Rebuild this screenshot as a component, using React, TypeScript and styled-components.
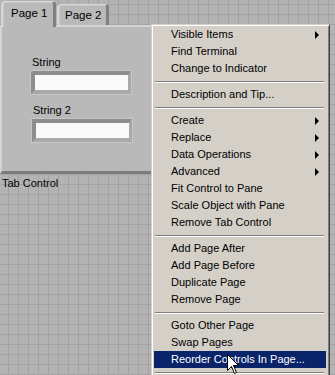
import React from "react";
import styled, { createGlobalStyle } from "styled-components";

const Global = createGlobalStyle`
  html, body { margin: 0; padding: 0; background: #b3b3b3; }
  body { font-family: "Liberation Sans", Arial, sans-serif; font-size: 11px; }
`;

const Canvas = styled.div`
  position: relative;
  width: 335px;
  height: 375px;
  overflow: hidden;
  background-color: #b3b3b3;
  background-image:
    linear-gradient(to right, #a3a3a3 1px, transparent 1px),
    linear-gradient(to bottom, #a3a3a3 1px, transparent 1px);
  background-size: 10px 10px;
  background-position: 8px 4px;
`;

const TabControl = styled.div`
  position: absolute;
  left: 0;
  top: 1px;
  width: 165px;
  display: flex;
  flex-direction: column;
`;

const TabRow = styled.div`
  display: flex;
  align-items: flex-end;
  padding-left: 1px;
  gap: 1px;
  height: 24px;
  position: relative;
  z-index: 1;
`;

const Tab = styled.div<{ $active?: boolean }>`
  box-sizing: border-box;
  height: ${(p) => (p.$active ? "26px" : "21px")};
  margin-bottom: ${(p) => (p.$active ? "-2px" : "0")};
  width: ${(p) => (p.$active ? "55px" : "52px")};
  background: #b9b9b9;
  border-top: 1px solid #d8d8d8;
  border-left: 2px solid #d6d6d6;
  border-right: 3px solid #7f7f7f;
  border-radius: 4px 4px 0 0;
  box-shadow: inset 1px 1px 0 #c8c8c8;
  display: flex;
  justify-content: flex-start;
  padding-left: ${(p) => (p.$active ? "8px" : "6px")};
  padding-top: ${(p) => (p.$active ? "4px" : "3px")};
  color: #000;
  font-size: 11.5px;
  line-height: 14px;
`;

const TabBody = styled.div`
  box-sizing: border-box;
  height: 149px;
  background: #b9b9b9;
  border-top: 2px solid #d4d4d4;
  border-left: 2px solid #d4d4d4;
  border-bottom: 3px solid #7c7c7c;
  padding: 29px 0 0 29px;
  display: flex;
  flex-direction: column;
`;

const Field = styled.div<{ $shift?: number }>`
  display: flex;
  flex-direction: column;
  margin-left: ${(p) => p.$shift ?? 0}px;
  margin-bottom: 10px;
`;

const FieldLabel = styled.span`
  font-size: 11px;
  line-height: 13px;
  padding-left: 1px;
  margin-bottom: 2px;
  color: #000;
`;

const TextBox = styled.div`
  box-sizing: border-box;
  width: 100px;
  height: 23px;
  background: #fafafa;
  border-top: 4px solid #8e8e8e;
  border-left: 4px solid #8e8e8e;
  border-bottom: 4px solid #a9a9a9;
  border-right: 3px solid #a9a9a9;
  box-shadow: 0 0 0 1px #c6c6c6;
`;

const ControlCaption = styled.span`
  margin-top: 3px;
  padding-left: 2px;
  font-size: 11px;
  line-height: 13px;
  color: #000;
`;

const Menu = styled.div`
  position: absolute;
  left: 151px;
  top: 24px;
  width: 179px;
  height: 360px;
  box-sizing: border-box;
  background: #d4d0c8;
  border-top: 1px solid #d4d0c8;
  border-left: 1px solid #d4d0c8;
  border-right: 1px solid #404040;
  box-shadow: inset 1px 1px 0 #ffffff, inset -1px 0 0 #808080;
  padding: 1px 3px 0 2px;
  display: flex;
  flex-direction: column;
  z-index: 2;
`;

const Item = styled.div<{ $active?: boolean }>`
  position: relative;
  height: 17px;
  line-height: 17px;
  padding-left: 17px;
  font-size: 11px;
  white-space: nowrap;
  color: ${(p) => (p.$active ? "#ffffff" : "#000000")};
  background: ${(p) => (p.$active ? "#0a246a" : "transparent")};
`;

const Arrow = styled.span`
  position: absolute;
  right: 7px;
  top: 5px;
  width: 0;
  height: 0;
  border-top: 4px solid transparent;
  border-bottom: 4px solid transparent;
  border-left: 4px solid #000;
`;

const Separator = styled.div`
  height: 9px;
  display: flex;
  align-items: center;
  padding: 0 2px 0 1px;
  &::before {
    content: "";
    flex: 1;
    height: 0;
    border-top: 1px solid #808080;
    border-bottom: 1px solid #ffffff;
  }
`;

const Cursor = styled.svg`
  position: absolute;
  left: 227px;
  top: 354px;
  z-index: 3;
`;

type Entry = { label: string; sub?: boolean; active?: boolean } | "sep";

const entries: Entry[] = [
  { label: "Visible Items", sub: true },
  { label: "Find Terminal" },
  { label: "Change to Indicator" },
  "sep",
  { label: "Description and Tip..." },
  "sep",
  { label: "Create", sub: true },
  { label: "Replace", sub: true },
  { label: "Data Operations", sub: true },
  { label: "Advanced", sub: true },
  { label: "Fit Control to Pane" },
  { label: "Scale Object with Pane" },
  { label: "Remove Tab Control" },
  "sep",
  { label: "Add Page After" },
  { label: "Add Page Before" },
  { label: "Duplicate Page" },
  { label: "Remove Page" },
  "sep",
  { label: "Goto Other Page" },
  { label: "Swap Pages" },
  { label: "Reorder Controls In Page...", active: true },
  "sep",
];

export default function App() {
  return (
    <>
      <Global />
      <Canvas>
        <TabControl>
          <TabRow>
            <Tab $active>Page 1</Tab>
            <Tab>Page 2</Tab>
          </TabRow>
          <TabBody>
            <Field>
              <FieldLabel>String</FieldLabel>
              <TextBox />
            </Field>
            <Field $shift={1}>
              <FieldLabel>String 2</FieldLabel>
              <TextBox />
            </Field>
          </TabBody>
          <ControlCaption>Tab Control</ControlCaption>
        </TabControl>
        <Menu>
          {entries.map((e, i) =>
            e === "sep" ? (
              <Separator key={i} />
            ) : (
              <Item key={i} $active={e.active}>
                {e.label}
                {e.sub && <Arrow />}
              </Item>
            )
          )}
        </Menu>
        <Cursor width="13" height="21" viewBox="0 0 13 21">
          <path
            d="M0.5 0.5 L0.5 16.5 L4.5 12.5 L7.5 19.5 L9.5 18.5 L6.5 11.5 L11.5 11.5 Z"
            fill="#ffffff"
            stroke="#000000"
            strokeWidth="1"
          />
        </Cursor>
      </Canvas>
    </>
  );
}
